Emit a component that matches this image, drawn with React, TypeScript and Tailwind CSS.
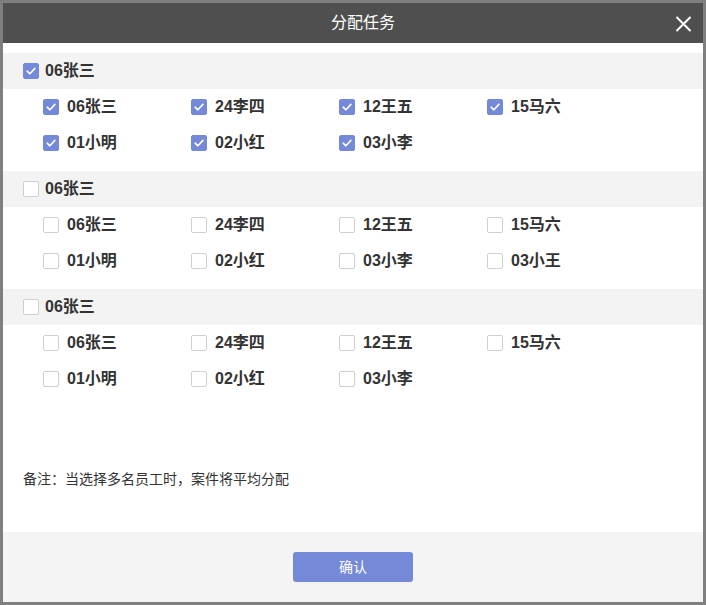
import React, { useState } from 'react'

type Member = { id: string; name: string }

const groupsData: { title: string; members: Member[]; checked: boolean }[] = [
  {
    title: '06张三',
    checked: true,
    members: [
      { id: 'a1', name: '06张三' },
      { id: 'a2', name: '24李四' },
      { id: 'a3', name: '12王五' },
      { id: 'a4', name: '15马六' },
      { id: 'a5', name: '01小明' },
      { id: 'a6', name: '02小红' },
      { id: 'a7', name: '03小李' },
    ],
  },
  {
    title: '06张三',
    checked: false,
    members: [
      { id: 'b1', name: '06张三' },
      { id: 'b2', name: '24李四' },
      { id: 'b3', name: '12王五' },
      { id: 'b4', name: '15马六' },
      { id: 'b5', name: '01小明' },
      { id: 'b6', name: '02小红' },
      { id: 'b7', name: '03小李' },
      { id: 'b8', name: '03小王' },
    ],
  },
  {
    title: '06张三',
    checked: false,
    members: [
      { id: 'c1', name: '06张三' },
      { id: 'c2', name: '24李四' },
      { id: 'c3', name: '12王五' },
      { id: 'c4', name: '15马六' },
      { id: 'c5', name: '01小明' },
      { id: 'c6', name: '02小红' },
      { id: 'c7', name: '03小李' },
    ],
  },
]

const Box = ({ checked, onClick }: { checked: boolean; onClick: () => void }) => (
  <span
    onClick={onClick}
    className={`flex h-[16px] w-[16px] shrink-0 cursor-pointer items-center justify-center rounded-[2px] border ${
      checked ? 'border-[#7589d9] bg-[#7589d9]' : 'border-[#cfcfcf] bg-white'
    }`}
  >
    {checked && (
      <svg width="12" height="12" viewBox="0 0 12 12" fill="none">
        <path d="M2.2 6.2 L4.9 8.8 L9.9 3.4" stroke="white" strokeWidth="1.6" strokeLinecap="round" strokeLinejoin="round" />
      </svg>
    )}
  </span>
)

export default function App() {
  const [checked, setChecked] = useState<Record<string, boolean>>(() => {
    const init: Record<string, boolean> = {}
    groupsData.forEach((g, i) => {
      init['g' + i] = g.checked
      g.members.forEach((m) => (init[m.id] = g.checked))
    })
    return init
  })

  const toggle = (key: string) => setChecked((s) => ({ ...s, [key]: !s[key] }))

  return (
    <div className="flex h-[605px] w-[706px] flex-col border-[3px] border-[#7f7f7f] bg-white font-['Liberation_Sans','Noto_Sans_CJK_SC',sans-serif] text-[#333]">
      <div className="relative flex h-[40px] shrink-0 items-center justify-center bg-[#4f4f4f] pl-[20px] text-[16px] text-white">
        分配任务
        <button className="absolute right-[11px] top-[12px] flex h-[18px] w-[18px] items-center justify-center">
          <svg width="17" height="16" viewBox="0 0 17 16" fill="none">
            <path d="M1.5 1 L15.5 15 M15.5 1 L1.5 15" stroke="white" strokeWidth="2" />
          </svg>
        </button>
      </div>

      <div className="flex flex-1 flex-col pt-[10px]">
        {groupsData.map((g, i) => (
          <div key={i} className="pb-[10px]">
            <div className="flex h-[36px] items-center gap-[6px] bg-[#f3f3f3] pl-[20px] text-[16px] font-bold">
              <Box checked={checked['g' + i]} onClick={() => toggle('g' + i)} />
              <span>{g.title}</span>
            </div>
            <div className="grid grid-cols-[repeat(4,148px)] pl-[40px]">
              {g.members.map((m) => (
                <div key={m.id} className="flex h-[36px] items-center gap-[8px] text-[16px] font-bold">
                  <Box checked={checked[m.id]} onClick={() => toggle(m.id)} />
                  <span>{m.name}</span>
                </div>
              ))}
            </div>
          </div>
        ))}
        <p className="mt-[62px] pl-[20px] text-[14px] leading-[20px] text-[#333]">备注：当选择多名员工时，案件将平均分配</p>
      </div>

      <div className="flex h-[70px] shrink-0 items-center justify-center bg-[#f4f4f4]">
        <button className="h-[30px] w-[120px] rounded-[3px] bg-[#7589d9] text-[14px] text-white">确认</button>
      </div>
    </div>
  )
}
